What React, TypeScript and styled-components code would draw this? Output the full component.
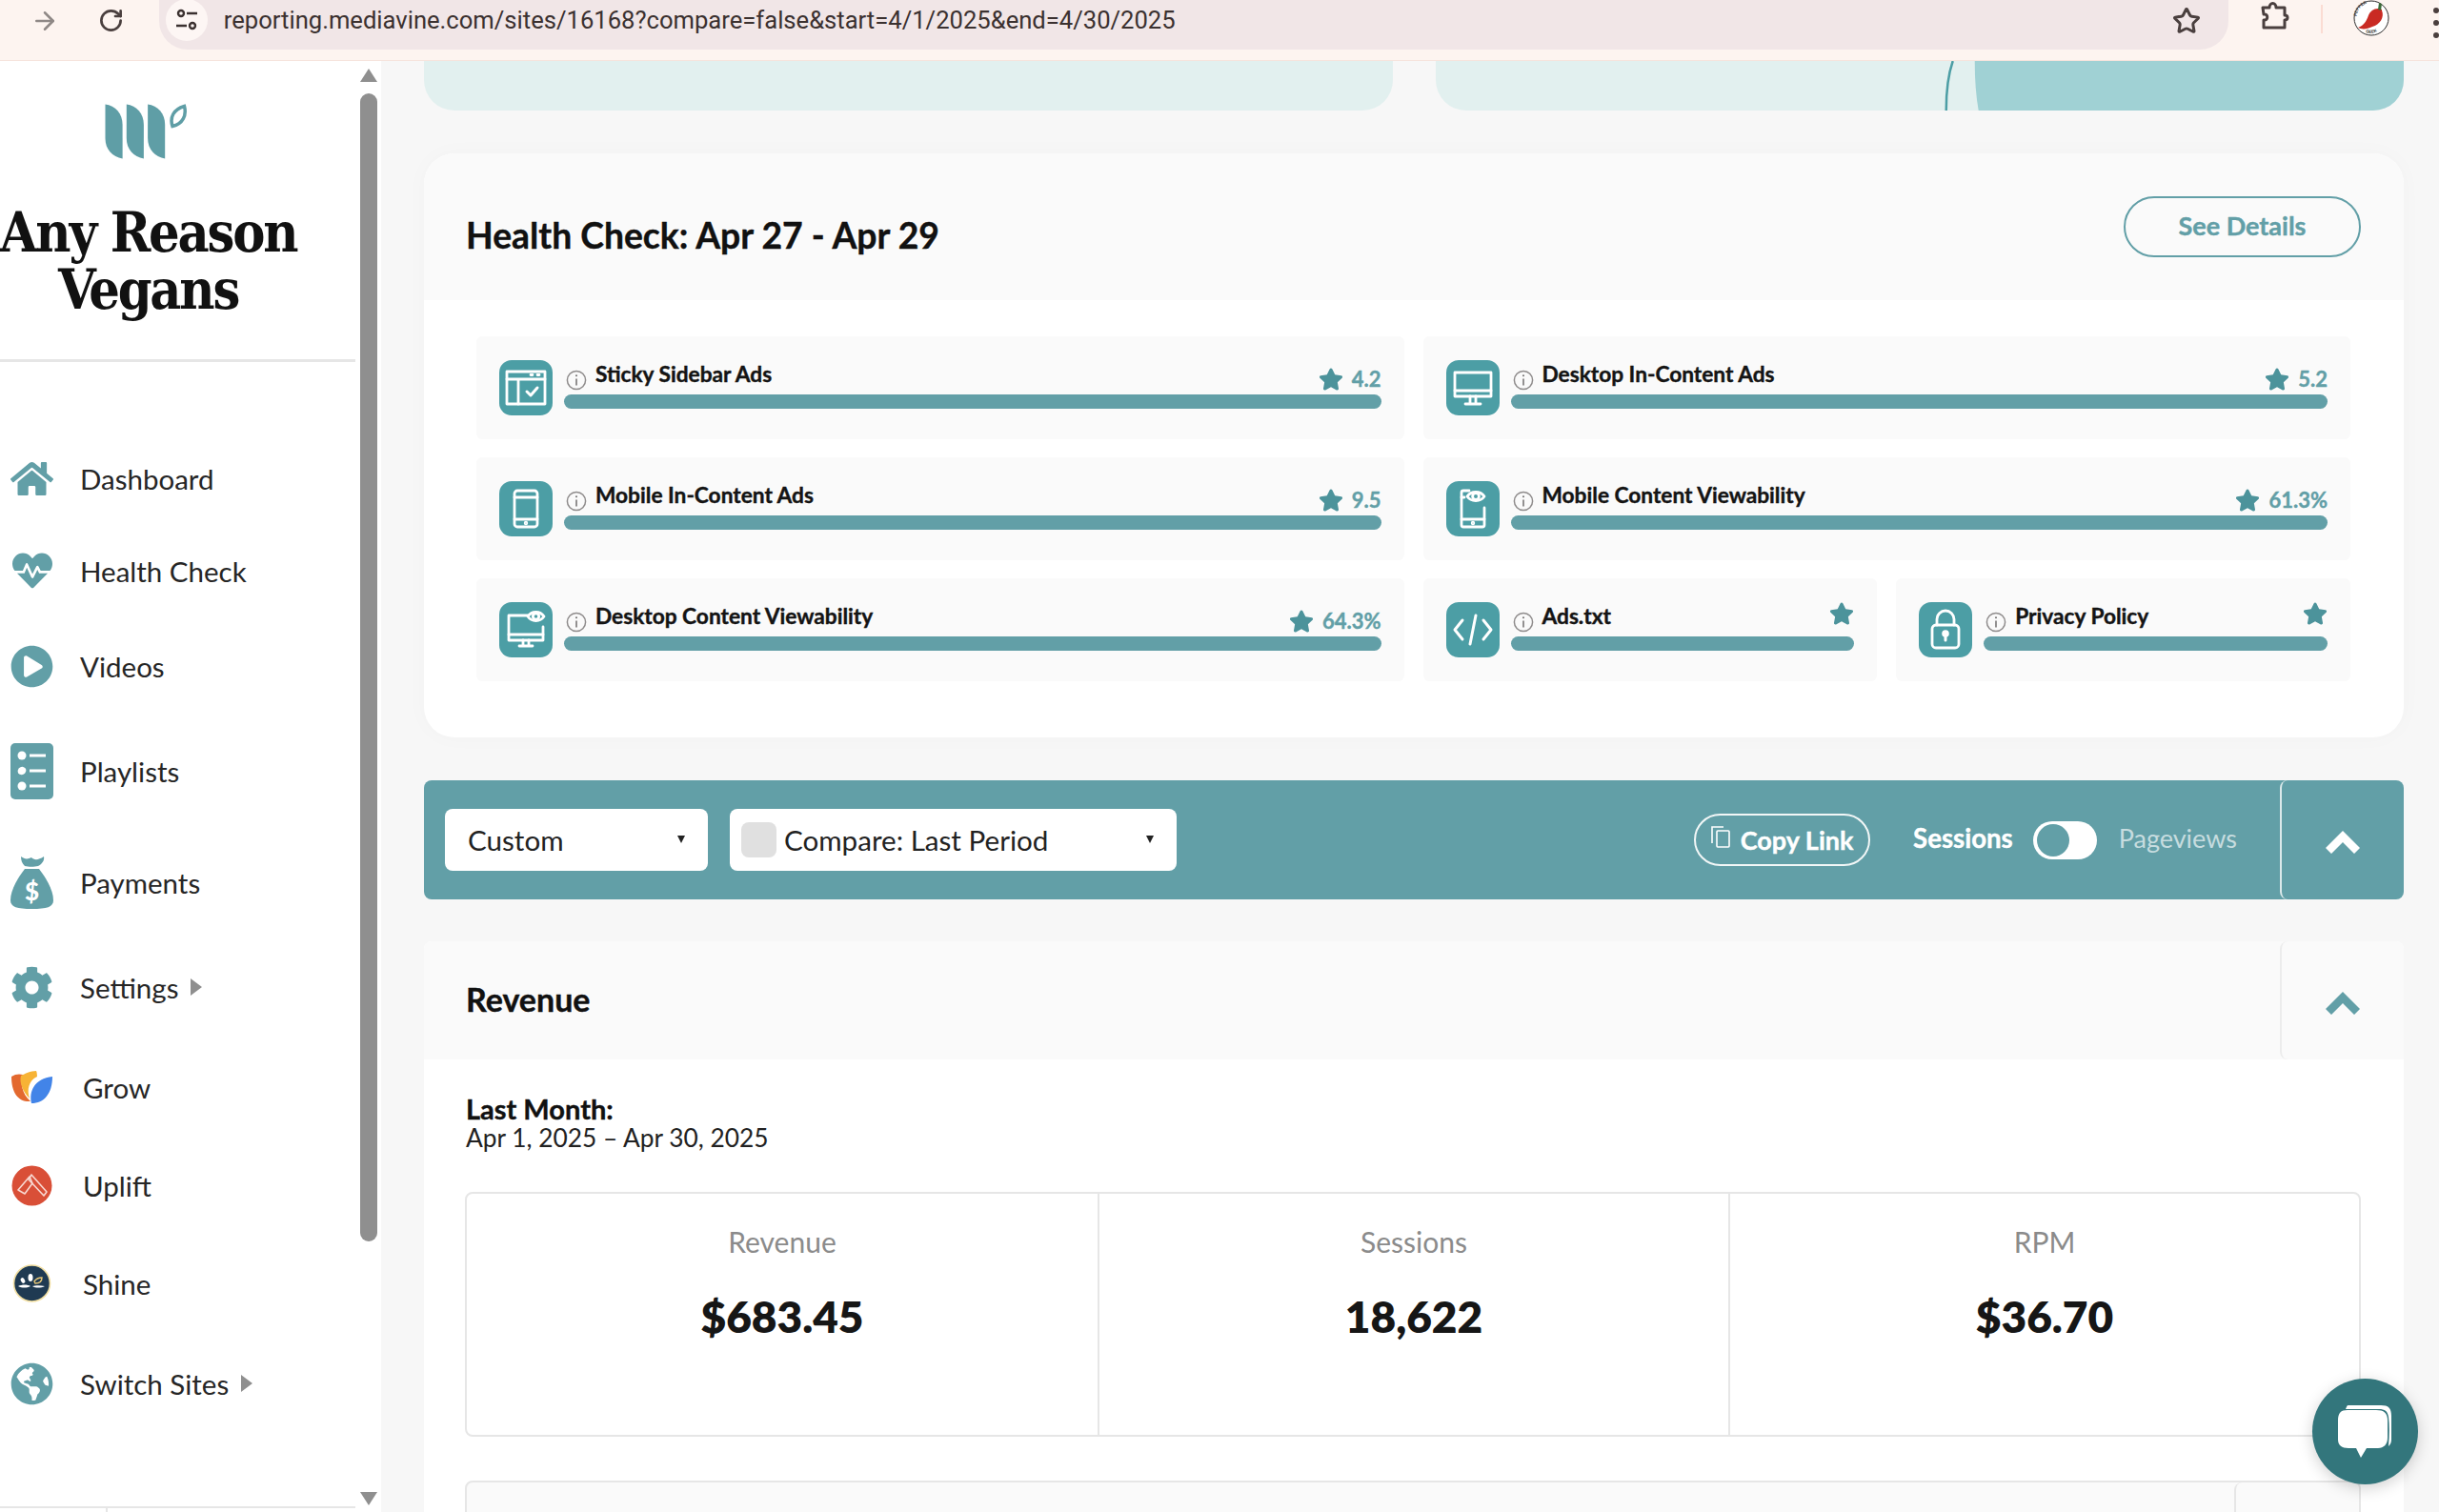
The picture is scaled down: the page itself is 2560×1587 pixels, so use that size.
import React from "react";
import styled, { createGlobalStyle } from "styled-components";
import { ArrowRight, RotateCw, Star } from "lucide-react";
import {
  FaHome,
  FaHeartbeat,
  FaPlayCircle,
  FaCog,
  FaGlobeAmericas,
  FaStar,
} from "react-icons/fa";

const TEAL = "#629fa7";
const SANS = `Lato, "Open Sans", sans-serif`;
// the reference font is a touch heavier than Lato Bold
const HEAVY = `font-weight: 700; -webkit-text-stroke: 0.4px currentColor;`;

const GlobalStyle = createGlobalStyle`
  html, body {
    margin: 0;
    padding: 0;
    overflow: hidden;
    background: #f7f7f7;
  }
  * {
    box-sizing: border-box;
  }
`;

const Page = styled.div`
  position: relative;
  width: 2560px;
  height: 1587px;
  display: flex;
  flex-direction: column;
  overflow: hidden;
  font-family: ${SANS};
  color: #1b1b1b;
`;

/* browser chrome */

const BrowserBar = styled.header`
  flex: 0 0 64px;
  display: flex;
  align-items: flex-start;
  background: #fdf4f0;
  border-bottom: 1px solid #f6e4dd;
`;

const NavButton = styled.div<{ $width: number; $muted?: boolean }>`
  width: ${(p) => p.$width}px;
  height: 43px;
  display: flex;
  align-items: center;
  justify-content: flex-end;
  color: ${(p) => (p.$muted ? "#8f8886" : "#4a3f3e")};
`;

const Omnibox = styled.div`
  width: 2176px;
  height: 52px;
  margin-left: 37px;
  padding: 0 29px 0 7px;
  display: flex;
  align-items: flex-start;
  background: #f1e6e7;
  border-radius: 0 0 30px 30px;
`;

const SiteChip = styled.div`
  width: 44px;
  height: 44px;
  margin-top: -1px;
  display: flex;
  align-items: center;
  justify-content: center;
  background: #fdf6f4;
  border-radius: 50%;
`;

const Url = styled.div`
  flex: 1;
  margin-left: 17px;
  font-family: Roboto, sans-serif;
  font-size: 25.6px;
  line-height: 43px;
  color: #3b3130;
  white-space: nowrap;
`;

const ChromeIcons = styled.div`
  flex: 1;
  display: flex;
  align-items: flex-start;
  padding-left: 33px;
`;

const ChromeDivider = styled.div`
  width: 2px;
  height: 30px;
  margin: 5px 32px 0 32px;
  background: #fbdcd3;
`;

const Dots = styled.div`
  margin: 8px 0 0 46px;
  display: flex;
  flex-direction: column;
  gap: 7px;
  span {
    width: 6px;
    height: 6px;
    background: #4a3f3e;
    border-radius: 50%;
  }
`;

/* sidebar */

const Shell = styled.div`
  flex: 1;
  display: flex;
  min-height: 0;
`;

const Sidebar = styled.aside`
  flex: 0 0 400px;
  display: flex;
  background: #fff;
`;

const SideContent = styled.div`
  width: 373px;
  display: flex;
  flex-direction: column;
`;

const SideHead = styled.div`
  width: 311px;
  padding-top: 45px;
  display: flex;
  flex-direction: column;
  align-items: center;
`;

const LogoMark = styled.svg`
  margin-left: -5px;
`;

const SiteTitle = styled.h1`
  margin: 47px 0 0;
  width: 340px;
  flex: none;
  font-family: "DejaVu Serif", serif;
  font-stretch: condensed;
  font-size: 57px;
  font-weight: 700;
  line-height: 60px;
  letter-spacing: -2.2px;
  text-align: center;
  color: #111;
`;

const SideDivider = styled.hr`
  width: 100%;
  height: 3px;
  margin: 43px 0 73px;
  border: 0;
  background: #e6e6e6;
`;

const NavRow = styled.a<{ $height: number; $brand?: boolean }>`
  height: ${(p) => p.$height}px;
  padding-left: 11px;
  display: flex;
  align-items: center;
  gap: ${(p) => (p.$brand ? 31 : 28)}px;
  font-size: 29.5px;
  color: #262626;
`;

const NavIcon = styled.span`
  width: 45px;
  display: flex;
  justify-content: center;
  color: ${TEAL};
`;

const NavArrow = styled.span`
  margin-left: -15px;
  width: 0;
  height: 0;
  border-left: 12px solid #8f8f8f;
  border-top: 9px solid transparent;
  border-bottom: 9px solid transparent;
`;

const SideFoot = styled.div`
  margin-top: auto;
  height: 6px;
  border-top: 2px solid #e6e6e6;
  position: relative;
  &::after {
    content: "";
    position: absolute;
    left: 111px;
    top: 0;
    width: 2px;
    height: 6px;
    background: #e6e6e6;
  }
`;

const ScrollTrack = styled.div`
  width: 18px;
  margin-left: 5px;
  padding: 8px 0 7px;
  display: flex;
  flex-direction: column;
  align-items: center;
`;

const ScrollArrow = styled.span<{ $down?: boolean }>`
  width: 0;
  height: 0;
  border-left: 9px solid transparent;
  border-right: 9px solid transparent;
  ${(p) =>
    p.$down
      ? `border-top: 14px solid #8f8f8f; margin-top: auto;`
      : `border-bottom: 14px solid #8f8f8f;`}
`;

const ScrollThumb = styled.div`
  width: 18px;
  height: 1205px;
  margin-top: 12px;
  background: #8f8f8f;
  border-radius: 9px;
`;

/* main column */

const Main = styled.main`
  flex: 1;
  min-width: 0;
  padding: 0 37px 0 45px;
  background: #f7f7f7;
`;

const BannerRow = styled.div`
  display: grid;
  grid-template-columns: 1fr 1fr;
  gap: 45px;
  height: 52px;
`;

const Banner = styled.div`
  position: relative;
  overflow: hidden;
  background: #e2f0ef;
  border-radius: 0 0 32px 32px;
  svg {
    position: absolute;
    inset: 0;
    width: 100%;
    height: 100%;
  }
`;

const HealthCard = styled.section`
  margin-top: 45px;
  background: #fff;
  border-radius: 32px;
  overflow: hidden;
  box-shadow: 0 0 24px rgba(0, 0, 0, 0.025);
`;

const CardHead = styled.div`
  height: 154px;
  padding: 44px 45px 0 44px;
  display: flex;
  justify-content: space-between;
  align-items: flex-start;
  background: #fafafa;
`;

const CardTitle = styled.h2`
  margin: 11px 0 0;
  font-size: 37.3px;
  ${HEAVY}
  line-height: 62px;
  color: #111;
`;

const OutlineButton = styled.a`
  width: 249px;
  height: 64px;
  margin-top: 1px;
  padding-bottom: 3px;
  display: flex;
  align-items: center;
  justify-content: center;
  border: 2px solid ${TEAL};
  border-radius: 32px;
  font-size: 27px;
  ${HEAVY}
  color: ${TEAL};
`;

const HealthGrid = styled.div`
  padding: 38px 56px 59px 55px;
  display: grid;
  grid-template-columns: repeat(4, 1fr);
  column-gap: 20px;
  row-gap: 19px;
`;

const HealthRow = styled.div<{ $span: number }>`
  grid-column: span ${(p) => p.$span};
  height: 108px;
  padding: 25px 24px 0 24px;
  display: flex;
  gap: 12px;
  background: #fafafa;
  border-radius: 6px;
`;

const HealthIcon = styled.div`
  flex: 0 0 56px;
  height: 58px;
  background: #4c9ea5;
  border-radius: 13px;
  svg {
    display: block;
  }
`;

const HealthBody = styled.div`
  flex: 1;
  min-width: 0;
`;

const HealthHead = styled.div`
  height: 36px;
  padding-left: 2px;
  display: flex;
  align-items: flex-start;
`;

const InfoIcon = styled.svg`
  flex: none;
  width: 22px;
  height: 22px;
  margin-top: 10px;
`;

const HealthLabel = styled.div`
  margin: 1px 0 0 9px;
  font-size: 22.7px;
  ${HEAVY}
  line-height: 28px;
  color: #141414;
`;

const HealthScore = styled.div<{ $high?: boolean }>`
  margin-left: auto;
  margin-top: ${(p) => (p.$high ? -1 : 7)}px;
  display: flex;
  align-items: center;
  gap: 9px;
  font-size: 22px;
  ${HEAVY}
  line-height: 24px;
  color: ${TEAL};
`;

const HealthBar = styled.div`
  height: 15px;
  background: ${TEAL};
  border-radius: 8px;
`;

/* filter toolbar */

const Toolbar = styled.div`
  height: 125px;
  margin-top: 45px;
  padding-left: 22px;
  display: flex;
  align-items: center;
  gap: 23px;
  background: ${TEAL};
  border-radius: 8px;
`;

const Select = styled.div<{ $width: number; $padLeft: number }>`
  width: ${(p) => p.$width}px;
  height: 65px;
  padding: 0 24px 1px ${(p) => p.$padLeft}px;
  display: flex;
  align-items: center;
  gap: 8px;
  background: #fff;
  border-radius: 8px;
  font-size: 29.6px;
  color: #222;
`;

const Swatch = styled.span`
  width: 37px;
  height: 37px;
  background: #e0e0e0;
  border-radius: 8px;
`;

const Caret = styled.span`
  margin-left: auto;
  width: 0;
  height: 0;
  border-left: 4px solid transparent;
  border-right: 4px solid transparent;
  border-top: 8px solid #222;
`;

const CopyLink = styled.a`
  width: 185px;
  height: 55px;
  margin-left: auto;
  display: flex;
  align-items: center;
  justify-content: center;
  gap: 11px;
  border: 2px solid #f2f7f7;
  border-radius: 28px;
  font-size: 27px;
  ${HEAVY}
  color: #fff;
`;

const CopyIcon = styled.svg`
  margin-top: -6px;
`;

const MetricToggle = styled.div`
  margin-left: 22px;
  display: flex;
  align-items: center;
`;

const MetricLabel = styled.span<{ $active?: boolean }>`
  margin-top: -5px;
  margin-right: ${(p) => (p.$active ? 21 : 0)}px;
  margin-left: ${(p) => (p.$active ? 0 : 23)}px;
  font-size: ${(p) => (p.$active ? 27.6 : 27)}px;
  font-weight: ${(p) => (p.$active ? 700 : 400)};
  -webkit-text-stroke: ${(p) => (p.$active ? "0.4px currentColor" : "0")};
  color: ${(p) => (p.$active ? "#fff" : "#c6dcdf")};
`;

const ToggleTrack = styled.div`
  width: 67px;
  height: 40px;
  padding: 3px 4px;
  background: #fff;
  border-radius: 20px;
`;

const ToggleKnob = styled.div`
  width: 34px;
  height: 34px;
  background: ${TEAL};
  border-radius: 50%;
`;

const CollapseCell = styled.div<{ $light?: boolean }>`
  flex: 0 0 130px;
  align-self: stretch;
  margin-left: ${(p) => (p.$light ? 0 : 22)}px;
  display: flex;
  align-items: center;
  justify-content: center;
  padding-top: 5px;
  border-left: 2px solid ${(p) => (p.$light ? "#ececec" : "#dbe9ea")};
  border-radius: 8px 0 0 8px;
  color: ${(p) => (p.$light ? TEAL : "#fff")};
`;

/* revenue section */

const RevenueCard = styled.section`
  margin-top: 44px;
  background: #fff;
  border-radius: 8px 8px 0 0;
`;

const RevenueHead = styled.div`
  height: 124px;
  padding-left: 44px;
  display: flex;
  align-items: center;
  justify-content: space-between;
  background: #fafafa;
  border-radius: 8px 8px 0 0;
`;

const RevenueTitle = styled.h2`
  margin: -4px 0 0;
  font-size: 34px;
  ${HEAVY}
  color: #111;
`;

const RevenueBody = styled.div`
  padding: 37px 45px 0 44px;
`;

const PeriodLabel = styled.div`
  font-size: 29px;
  ${HEAVY}
  line-height: 30px;
  color: #111;
`;

const PeriodDates = styled.div`
  font-size: 26.3px;
  line-height: 30px;
  color: #222;
`;

const StatsTable = styled.div`
  height: 257px;
  margin: 42px 0 0 -1px;
  display: grid;
  grid-template-columns: repeat(3, 1fr);
  border: 2px solid #e6e6e6;
  border-radius: 8px;
`;

const StatCell = styled.div`
  padding-top: 33px;
  text-align: center;
  & + & {
    border-left: 2px solid #e6e6e6;
  }
`;

const StatLabel = styled.div`
  font-size: 30px;
  line-height: 34px;
  color: #8b8b8b;
`;

const StatValue = styled.div`
  margin-top: 32px;
  font-size: 46px;
  font-weight: 800;
  line-height: 60px;
  color: #161616;
`;

const NextTable = styled.div`
  height: 60px;
  margin: 46px 0 0 -1px;
  display: flex;
  justify-content: flex-end;
  background: #fafafa;
  border: 2px solid #e6e6e6;
  border-radius: 8px 8px 0 0;
`;

const NextCell = styled.div`
  width: 131px;
  border-left: 2px solid #e6e6e6;
  border-radius: 8px 0 0 0;
`;

const ChatButton = styled.div`
  position: absolute;
  left: 2427px;
  top: 1447px;
  width: 111px;
  height: 111px;
  background: #33767c;
  border-radius: 50%;
  box-shadow: 0 4px 16px rgba(0, 0, 0, 0.18);
  svg {
    display: block;
  }
`;

/* drawings */

const MediavineLogo = () => (
  <LogoMark width="86" height="58" viewBox="0 0 86 58">
    {[0, 22.3, 44.6].map((x) => (
      <path
        key={x}
        transform={`translate(${x} 0)`}
        d="M0.5 0.5C11 2 18.6 10 18.6 22V57.5C8 55.5 0.5 48 0.5 36Z"
        fill="#5f9ea6"
      />
    ))}
    <path
      d="M83.5 2.5C86 12 82 21 71 23.5C68 14 72 6 83.5 2.5Z"
      fill="none"
      stroke="#5f9ea6"
      strokeWidth="3.5"
    />
  </LogoMark>
);

const SiteInfoGlyph = () => (
  <svg width="26" height="26" viewBox="0 0 26 26" fill="none" stroke="#3b3130" strokeWidth="2.4">
    <circle cx="7" cy="6" r="3" />
    <path d="M13 6h11M2 19h11" />
    <circle cx="19" cy="19" r="3" />
  </svg>
);

const PuzzleGlyph = () => (
  <svg width="32" height="32" viewBox="0 0 32 32" fill="none" stroke="#4a3f3e" strokeWidth="3" strokeLinejoin="round">
    <path d="M3 8h7c0-6 7-6 7 0h9v8c4 0 4 5 0 5v8H4v-8c5 1 5-7 0-6Z" />
  </svg>
);

const PepperAvatar = () => (
  <svg width="38" height="38" viewBox="0 0 38 38">
    <circle cx="19" cy="19" r="18" fill="#fff" stroke="#2d2d2d" strokeWidth="1" />
    <path d="M30 11C33 18 28 26 20 28C14 31 9 31 5 29C11 27 14 22 16 16C18 11 24 7 30 10Z" fill="#c92a23" />
    <path d="M26 10l1-7 3 1-1 7Z" fill="#3c6b38" />
    <defs>
      <path id="pepperRing" d="M3.5 17a15.5 15.5 0 0 1 23-12" />
      <path id="geekRing" d="M13 34a15.5 15.5 0 0 0 20-12" />
    </defs>
    <text fontFamily="Liberation Sans, sans-serif" fontSize="4.4" fontWeight="700" fill="#333">
      <textPath href="#pepperRing">PEPPER</textPath>
    </text>
    <text fontFamily="Liberation Sans, sans-serif" fontSize="4.4" fontWeight="700" fill="#333">
      <textPath href="#geekRing">GEEK</textPath>
    </text>
  </svg>
);

const PlaylistGlyph = () => (
  <svg width="45" height="59" viewBox="0 0 45 59">
    <rect width="45" height="59" rx="5" fill={TEAL} />
    <g fill="#fff">
      <circle cx="12" cy="13" r="4.5" />
      <ellipse cx="12" cy="29" rx="4.5" ry="4" transform="rotate(-30 12 29)" />
      <circle cx="12" cy="45" r="4.5" />
      <rect x="20" y="11.5" width="17" height="3" />
      <rect x="20" y="27.5" width="17" height="3" />
      <rect x="20" y="43.5" width="17" height="3" />
    </g>
  </svg>
);

const MoneyBagGlyph = () => (
  <svg width="45" height="56" viewBox="0 0 45 56">
    <path d="M11 1C15 4 18 4 22 2C25 5 29 5 35 1C36 5 33 9 29 11C25 12 19 12 15 11C12 8 11 5 11 1Z" fill={TEAL} />
    <path d="M15 14H30C36 22 45 35 45 47C45 54 38 56 22.5 56C7 56 0 54 0 47C0 35 9 22 15 14Z" fill={TEAL} />
    <text x="22.5" y="47" textAnchor="middle" fontFamily="Lato, sans-serif" fontSize="26" fontWeight="900" fill="#fff">$</text>
  </svg>
);

const GrowGlyph = () => (
  <svg width="43" height="35" viewBox="0 0 43 35">
    <path d="M0 6C4 3 9 3 12 4C9 12 11 24 20 32C8 33 0 24 0 6Z" fill="#e3692f" />
    <path d="M10 5C14 3 20 0 26 0C27 2 27 6 27 6C18 10 16 20 19 29C12 22 8 12 10 5Z" fill="#f7b335" />
    <path d="M43 6C43 24 34 34 21 34C18 22 24 8 43 6Z" fill="#4284e8" />
  </svg>
);

const UpliftGlyph = () => (
  <svg width="43" height="43" viewBox="0 0 43 43">
    <circle cx="21.5" cy="21.5" r="21" fill="#d94f37" />
    <g fill="none" stroke="#f8d9d2" strokeWidth="1.6" strokeLinejoin="round">
      <path d="M7 26L19 12l3 7-8 11Z" />
      <path d="M21 10l16 18-3 4-16-17Z" />
    </g>
  </svg>
);

const ShineGlyph = () => (
  <svg width="41" height="40" viewBox="0 0 41 40">
    <circle cx="20.5" cy="20" r="19" fill="#1f3a52" stroke="#f2dfa2" strokeWidth="1.6" />
    <g fill="#fff">
      <ellipse cx="19" cy="14" rx="2.5" ry="4" />
      <ellipse cx="11" cy="17" rx="2" ry="3" transform="rotate(-30 11 17)" />
      <path d="M6 23c4-2 10-2 13 0c-4 2-9 2-13 0Z" />
      <path d="M21 23c3-1 9-1 13 0c-4 2-10 2-13 0Z" />
    </g>
    <path d="M23 18c2-3 5-4 8-4c0 4-3 6-7 6Z" fill="none" stroke="#e7c777" strokeWidth="1.4" />
  </svg>
);

const ChevronUp = () => (
  <svg width="36" height="24" viewBox="0 0 36 24" fill="currentColor">
    <path d="M18 0L36 18L30 24L18 12L6 24L0 18Z" />
  </svg>
);

const InfoGlyph = () => (
  <InfoIcon viewBox="0 0 22 22" fill="none">
    <circle cx="11" cy="11" r="9.6" stroke="#8f8c8c" strokeWidth="1.5" />
    <path d="M11 9.5v7" stroke="#6f6c6c" strokeWidth="1.5" />
    <circle cx="11" cy="6.3" r="1" fill="#6f6c6c" />
  </InfoIcon>
);

const iconProps = {
  width: 56,
  height: 58,
  viewBox: "0 0 56 58",
  fill: "none",
  stroke: "#fff",
  strokeWidth: 2.8,
  strokeLinejoin: "round" as const,
  strokeLinecap: "round" as const,
};

const StickyIcon = () => (
  <svg {...iconProps}>
    <rect x="8" y="12" width="40" height="34" />
    <path d="M8 20h40M20 20v26M33 15.5h2M40 15.5h2" />
    <path d="M29 33l4 4 7-8" strokeWidth="3" />
  </svg>
);

const DesktopIcon = () => (
  <svg {...iconProps}>
    <rect x="9" y="13" width="38" height="25" />
    <path d="M9 32h38M25 38v8M31 38v8M20 46h16" />
  </svg>
);

const PhoneIcon = () => (
  <svg {...iconProps}>
    <rect x="16" y="10" width="24" height="38" rx="3" />
    <path d="M16 17h24M16 40h24" />
    <circle cx="28" cy="44" r="0.8" fill="#fff" />
  </svg>
);

const PhoneEyeIcon = () => (
  <svg {...iconProps}>
    <path d="M24 10h-6a2 2 0 0 0-2 2v34a2 2 0 0 0 2 2h20a2 2 0 0 0 2-2V28" />
    <path d="M16 40h24M16 17h3" />
    <circle cx="28" cy="44" r="0.8" fill="#fff" />
    <path d="M22 16c4-6 14-6 18 0c-4 6-14 6-18 0Z" />
    <circle cx="31" cy="16" r="3.4" />
  </svg>
);

const DesktopEyeIcon = () => (
  <svg {...iconProps}>
    <path d="M30 14H10v26h36V26" />
    <path d="M10 34h36M25 40v6M31 40v6M21 46h14" />
    <path d="M30 15c4-6 13-6 17 0c-4 6-13 6-17 0Z" />
    <circle cx="38.5" cy="15" r="3.2" />
  </svg>
);

const CodeIcon = () => (
  <svg {...iconProps}>
    <path d="M17 19L9 29l8 10M39 19l8 10-8 10M31 14l-6 30" strokeWidth="3" />
  </svg>
);

const LockIcon = () => (
  <svg {...iconProps}>
    <rect x="14" y="24" width="28" height="24" rx="4" />
    <path d="M19 24v-6a9 9 0 0 1 18 0v6" />
    <circle cx="28" cy="33" r="2.4" fill="#fff" />
    <path d="M28 34v6" strokeWidth="3" />
  </svg>
);

const CopyGlyph = () => (
  <CopyIcon width="20" height="23" viewBox="0 0 20 23" fill="none" stroke="#fff" strokeWidth="1.6">
    <rect x="6" y="5" width="13" height="17" rx="1" />
    <path d="M1 18V1h12" />
  </CopyIcon>
);

const ChatGlyph = () => (
  <svg width="111" height="111" viewBox="0 0 111 111">
    <path d="M38 28h34c8 0 11 3 11 11v25c0 3-1 5-3 7c1-12 1-22 0-31c-1-6-4-8-10-8H38c-1 0-2 0-3 0c1-2 1-4 3-4Z" fill="#fff" />
    <path d="M37 33h30c8 0 12 3 12 11v18c0 7-4 11-10 11H57l-6 10-5-10H38c-7 0-11-3-11-9V44c0-8 3-11 10-11Z" fill="#fff" />
  </svg>
);

type Health = {
  label: string;
  icon: React.ReactNode;
  value?: string;
  span: number;
};

const healthItems: Health[] = [
  { label: "Sticky Sidebar Ads", icon: <StickyIcon />, value: "4.2", span: 2 },
  { label: "Desktop In-Content Ads", icon: <DesktopIcon />, value: "5.2", span: 2 },
  { label: "Mobile In-Content Ads", icon: <PhoneIcon />, value: "9.5", span: 2 },
  { label: "Mobile Content Viewability", icon: <PhoneEyeIcon />, value: "61.3%", span: 2 },
  { label: "Desktop Content Viewability", icon: <DesktopEyeIcon />, value: "64.3%", span: 2 },
  { label: "Ads.txt", icon: <CodeIcon />, span: 1 },
  { label: "Privacy Policy", icon: <LockIcon />, span: 1 },
];

type NavItem = {
  label: string;
  icon: React.ReactNode;
  height: number;
  brand?: boolean;
  more?: boolean;
};

const navItems: NavItem[] = [
  { label: "Dashboard", icon: <FaHome size={45} />, height: 98 },
  { label: "Health Check", icon: <FaHeartbeat size={42} />, height: 96 },
  { label: "Videos", icon: <FaPlayCircle size={45} />, height: 104 },
  { label: "Playlists", icon: <PlaylistGlyph />, height: 116 },
  { label: "Payments", icon: <MoneyBagGlyph />, height: 118 },
  { label: "Settings", icon: <FaCog size={45} />, height: 102, more: true },
  { label: "Grow", icon: <GrowGlyph />, height: 108, brand: true },
  { label: "Uplift", icon: <UpliftGlyph />, height: 98, brand: true },
  { label: "Shine", icon: <ShineGlyph />, height: 108, brand: true },
  { label: "Switch Sites", icon: <FaGlobeAmericas size={45} />, height: 102, more: true },
];

const stats = [
  { label: "Revenue", value: "$683.45" },
  { label: "Sessions", value: "18,622" },
  { label: "RPM", value: "$36.70" },
];

export default function App() {
  return (
    <Page>
      <GlobalStyle />
      <BrowserBar>
        <NavButton $width={62} $muted>
          <ArrowRight size={30} strokeWidth={2} />
        </NavButton>
        <NavButton $width={68}>
          <RotateCw size={27} strokeWidth={2.4} />
        </NavButton>
        <Omnibox>
          <SiteChip>
            <SiteInfoGlyph />
          </SiteChip>
          <Url>reporting.mediavine.com/sites/16168?compare=false&amp;start=4/1/2025&amp;end=4/30/2025</Url>
          <NavButton $width={32}>
            <Star size={30} strokeWidth={2.4} />
          </NavButton>
        </Omnibox>
        <ChromeIcons>
          <PuzzleGlyph />
          <ChromeDivider />
          <PepperAvatar />
          <Dots>
            <span />
            <span />
            <span />
          </Dots>
        </ChromeIcons>
      </BrowserBar>

      <Shell>
        <Sidebar>
          <SideContent>
            <SideHead>
              <MediavineLogo />
              <SiteTitle>
                Any Reason
                <br />
                Vegans
              </SiteTitle>
            </SideHead>
            <SideDivider />
            {navItems.map((item) => (
              <NavRow key={item.label} $height={item.height} $brand={item.brand}>
                <NavIcon>{item.icon}</NavIcon>
                {item.label}
                {item.more && <NavArrow />}
              </NavRow>
            ))}
            <SideFoot />
          </SideContent>
          <ScrollTrack>
            <ScrollArrow />
            <ScrollThumb />
            <ScrollArrow $down />
          </ScrollTrack>
        </Sidebar>

        <Main>
          <BannerRow>
            <Banner />
            <Banner>
              <svg viewBox="0 0 1017 52" preserveAspectRatio="none">
                <path d="M566 0H1017V52H570Q566 30 566 0Z" fill="#a0d1d4" />
                <path d="M543 0Q536 20 536 52" fill="none" stroke="#4c9ea5" strokeWidth="2.5" />
              </svg>
            </Banner>
          </BannerRow>

          <HealthCard>
            <CardHead>
              <CardTitle>Health Check: Apr 27 - Apr 29</CardTitle>
              <OutlineButton>See Details</OutlineButton>
            </CardHead>
            <HealthGrid>
              {healthItems.map((item) => (
                <HealthRow key={item.label} $span={item.span}>
                  <HealthIcon>{item.icon}</HealthIcon>
                  <HealthBody>
                    <HealthHead>
                      <InfoGlyph />
                      <HealthLabel>{item.label}</HealthLabel>
                      <HealthScore $high={!item.value}>
                        <FaStar size={26} color="#4c939b" />
                        {item.value}
                      </HealthScore>
                    </HealthHead>
                    <HealthBar />
                  </HealthBody>
                </HealthRow>
              ))}
            </HealthGrid>
          </HealthCard>

          <Toolbar>
            <Select $width={276} $padLeft={24}>
              Custom
              <Caret />
            </Select>
            <Select $width={469} $padLeft={12}>
              <Swatch />
              Compare: Last Period
              <Caret />
            </Select>
            <CopyLink>
              <CopyGlyph />
              Copy Link
            </CopyLink>
            <MetricToggle>
              <MetricLabel $active>Sessions</MetricLabel>
              <ToggleTrack>
                <ToggleKnob />
              </ToggleTrack>
              <MetricLabel>Pageviews</MetricLabel>
            </MetricToggle>
            <CollapseCell>
              <ChevronUp />
            </CollapseCell>
          </Toolbar>

          <RevenueCard>
            <RevenueHead>
              <RevenueTitle>Revenue</RevenueTitle>
              <CollapseCell $light>
                <ChevronUp />
              </CollapseCell>
            </RevenueHead>
            <RevenueBody>
              <PeriodLabel>Last Month:</PeriodLabel>
              <PeriodDates>Apr 1, 2025 – Apr 30, 2025</PeriodDates>
              <StatsTable>
                {stats.map((s) => (
                  <StatCell key={s.label}>
                    <StatLabel>{s.label}</StatLabel>
                    <StatValue>{s.value}</StatValue>
                  </StatCell>
                ))}
              </StatsTable>
              <NextTable>
                <NextCell />
              </NextTable>
            </RevenueBody>
          </RevenueCard>
        </Main>
      </Shell>

      <ChatButton>
        <ChatGlyph />
      </ChatButton>
    </Page>
  );
}
